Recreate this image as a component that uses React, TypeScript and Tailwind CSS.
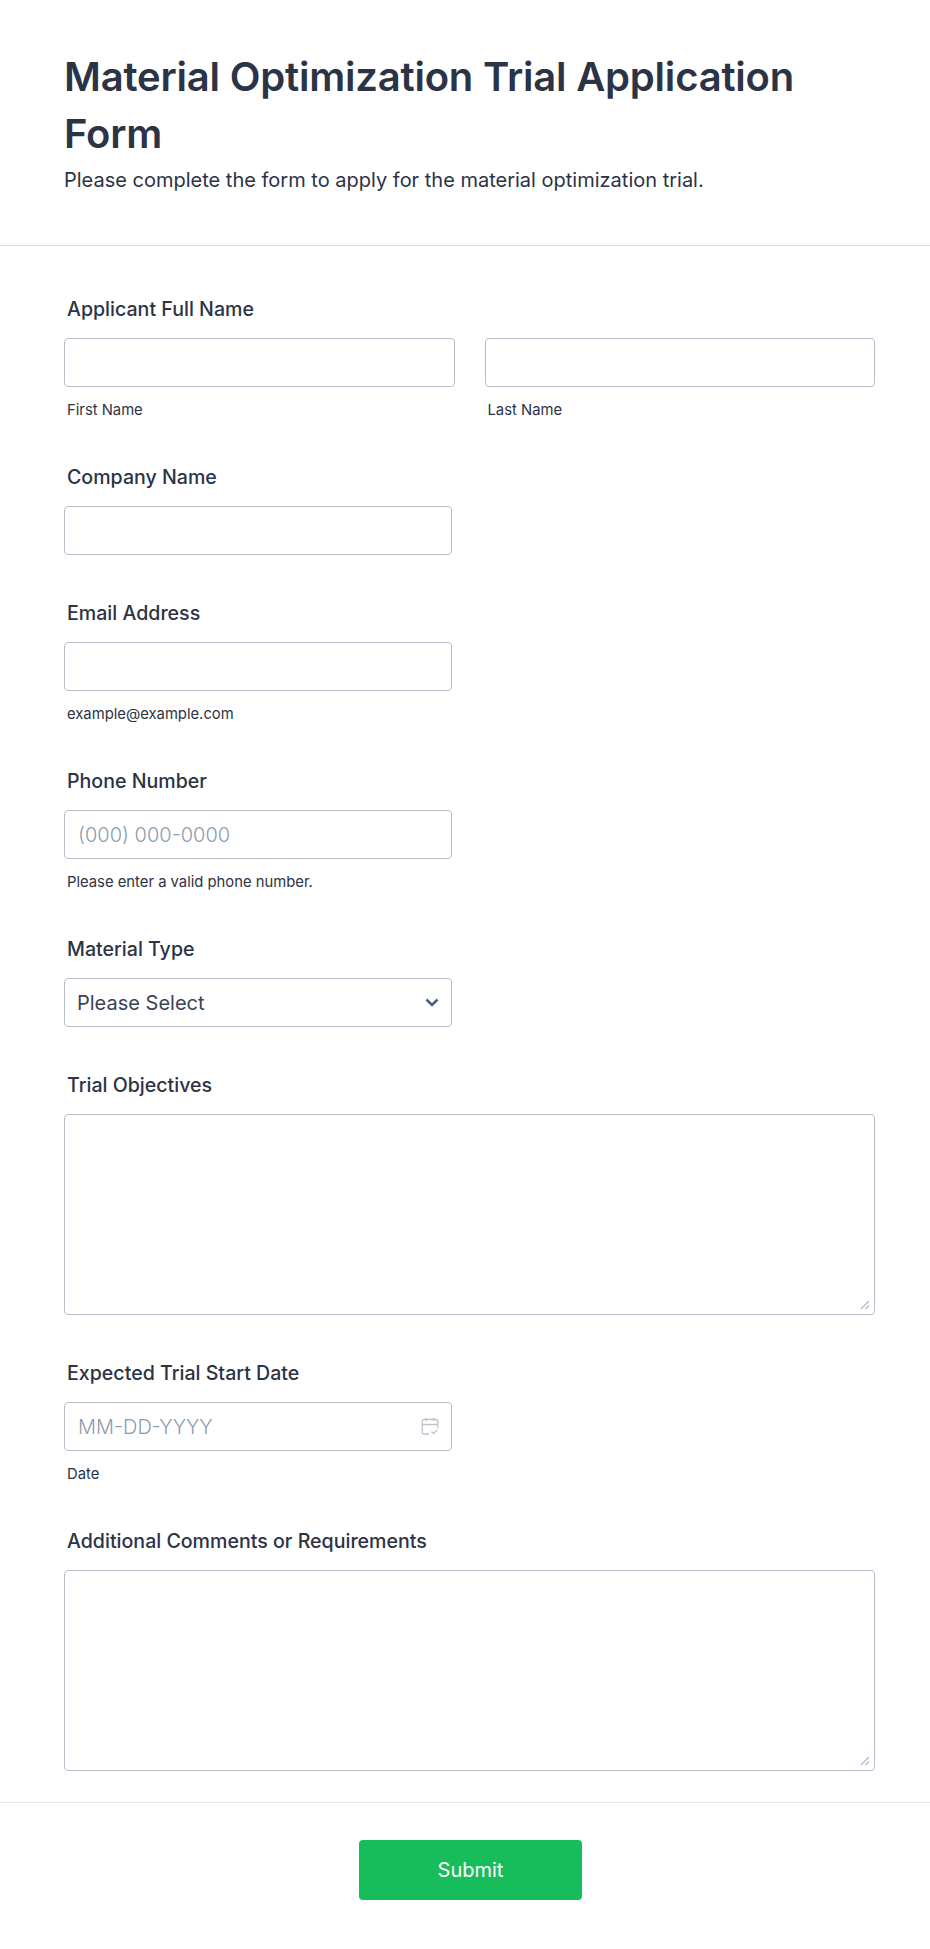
import React from "react";

const labelCls = "block px-[3px] text-[19.6px] leading-[26px] font-medium text-[#2c3345]";
const subCls = "block px-[3px] mt-[15px] text-[14.8px] leading-[17px] text-[#2c3345]";
const boxCls = "block h-[49px] rounded-[4px] border border-[#b8bdc9] bg-white px-[13px] text-[20px] text-[#2c3345] placeholder:text-[#8d9bb0] outline-none";

function Field({ label, children, sub }: { label: string; children: React.ReactNode; sub?: string }) {
  return (
    <div className="flex flex-col">
      <label className={labelCls}>{label}</label>
      <div className="mt-[16px]">{children}</div>
      {sub && <span className={subCls}>{sub}</span>}
    </div>
  );
}

function Area() {
  return (
    <div className="relative">
      <textarea className="block h-[201px] w-full resize-none rounded-[4px] border border-[#b8bdc9] bg-white outline-none" />
      <svg className="absolute right-[5px] bottom-[5px]" width="10" height="10" viewBox="0 0 10 10" fill="none" stroke="#b4b9c6" strokeWidth="1.2">
        <path d="M1 9 9 1M5.5 9 9 5.5" />
      </svg>
    </div>
  );
}

export default function App() {
  return (
    <div className="min-h-[1949px] w-[930px] bg-white font-['Inter',sans-serif]">
      <header className="h-[246px] border-b border-[#d5d8e0] pr-[55px] pl-16 pt-[48px]">
        <h1 className="text-[40px] leading-[57px] font-semibold tracking-[-0.2px] text-[#2c3345]">
          Material Optimization Trial Application Form
        </h1>
        <p className="mt-[6px] text-[20px] leading-[24px] text-[#2c3345]">
          Please complete the form to apply for the material optimization trial.
        </p>
      </header>
      <main className="flex flex-col gap-[45px] pr-[55px] pl-16 pt-[50px]">
        <div className="flex flex-col">
          <label className={labelCls}>Applicant Full Name</label>
          <div className="mt-[16px] grid grid-cols-2 gap-[30px]">
            <div>
              <input className={boxCls + " w-full"} />
              <span className={subCls}>First Name</span>
            </div>
            <div>
              <input className={boxCls + " w-full"} />
              <span className={subCls}>Last Name</span>
            </div>
          </div>
        </div>
        <Field label="Company Name">
          <input className={boxCls + " w-[388px]"} />
        </Field>
        <Field label="Email Address" sub="example@example.com">
          <input className={boxCls + " w-[388px]"} />
        </Field>
        <Field label="Phone Number" sub="Please enter a valid phone number.">
          <input className={boxCls + " w-[388px] font-light"} placeholder="(000) 000-0000" />
        </Field>
        <Field label="Material Type">
          <div className={boxCls + " w-[388px] flex items-center justify-between pl-[12px] pr-[12px] text-[#3a4358]"}>
            <span>Please Select</span>
            <svg width="14" height="9" viewBox="0 0 14 9" fill="none">
              <path d="M1.5 1.5 7 7l5.5-5.5" stroke="#4a5f80" strokeWidth="2.6" />
            </svg>
          </div>
        </Field>
        <Field label="Trial Objectives">
          <Area />
        </Field>
        <Field label="Expected Trial Start Date" sub="Date">
          <div className="relative w-[388px]">
            <input className={boxCls + " w-full font-light"} placeholder="MM-DD-YYYY" />
            <svg
              className="absolute right-[13px] top-[15px]"
              width="18"
              height="19"
              viewBox="0 0 18 19"
              fill="none"
              stroke="#bcc3d0"
              strokeWidth="1.3"
            >
              <path d="M8 17H3A1.8 1.8 0 0 1 1.2 15.2V4.3A1.8 1.8 0 0 1 3 2.5h12a1.8 1.8 0 0 1 1.8 1.8V11" />
              <path d="M1.2 7.5h15.6M5 .8v3.4M13 .8v3.4" />
              <path d="m10.5 14.5 2 2 4-4" />
            </svg>
          </div>
        </Field>
        <Field label="Additional Comments or Requirements">
          <Area />
        </Field>
      </main>
      <footer className="mt-[31px] flex justify-center border-t border-[#e3e5ea] pr-[55px] pl-[66px] pt-[37px]">
        <button className="h-[60px] w-[223px] rounded-[4px] bg-[#18bd5b] text-[20px] font-normal text-white">
          Submit
        </button>
      </footer>
    </div>
  );
}
